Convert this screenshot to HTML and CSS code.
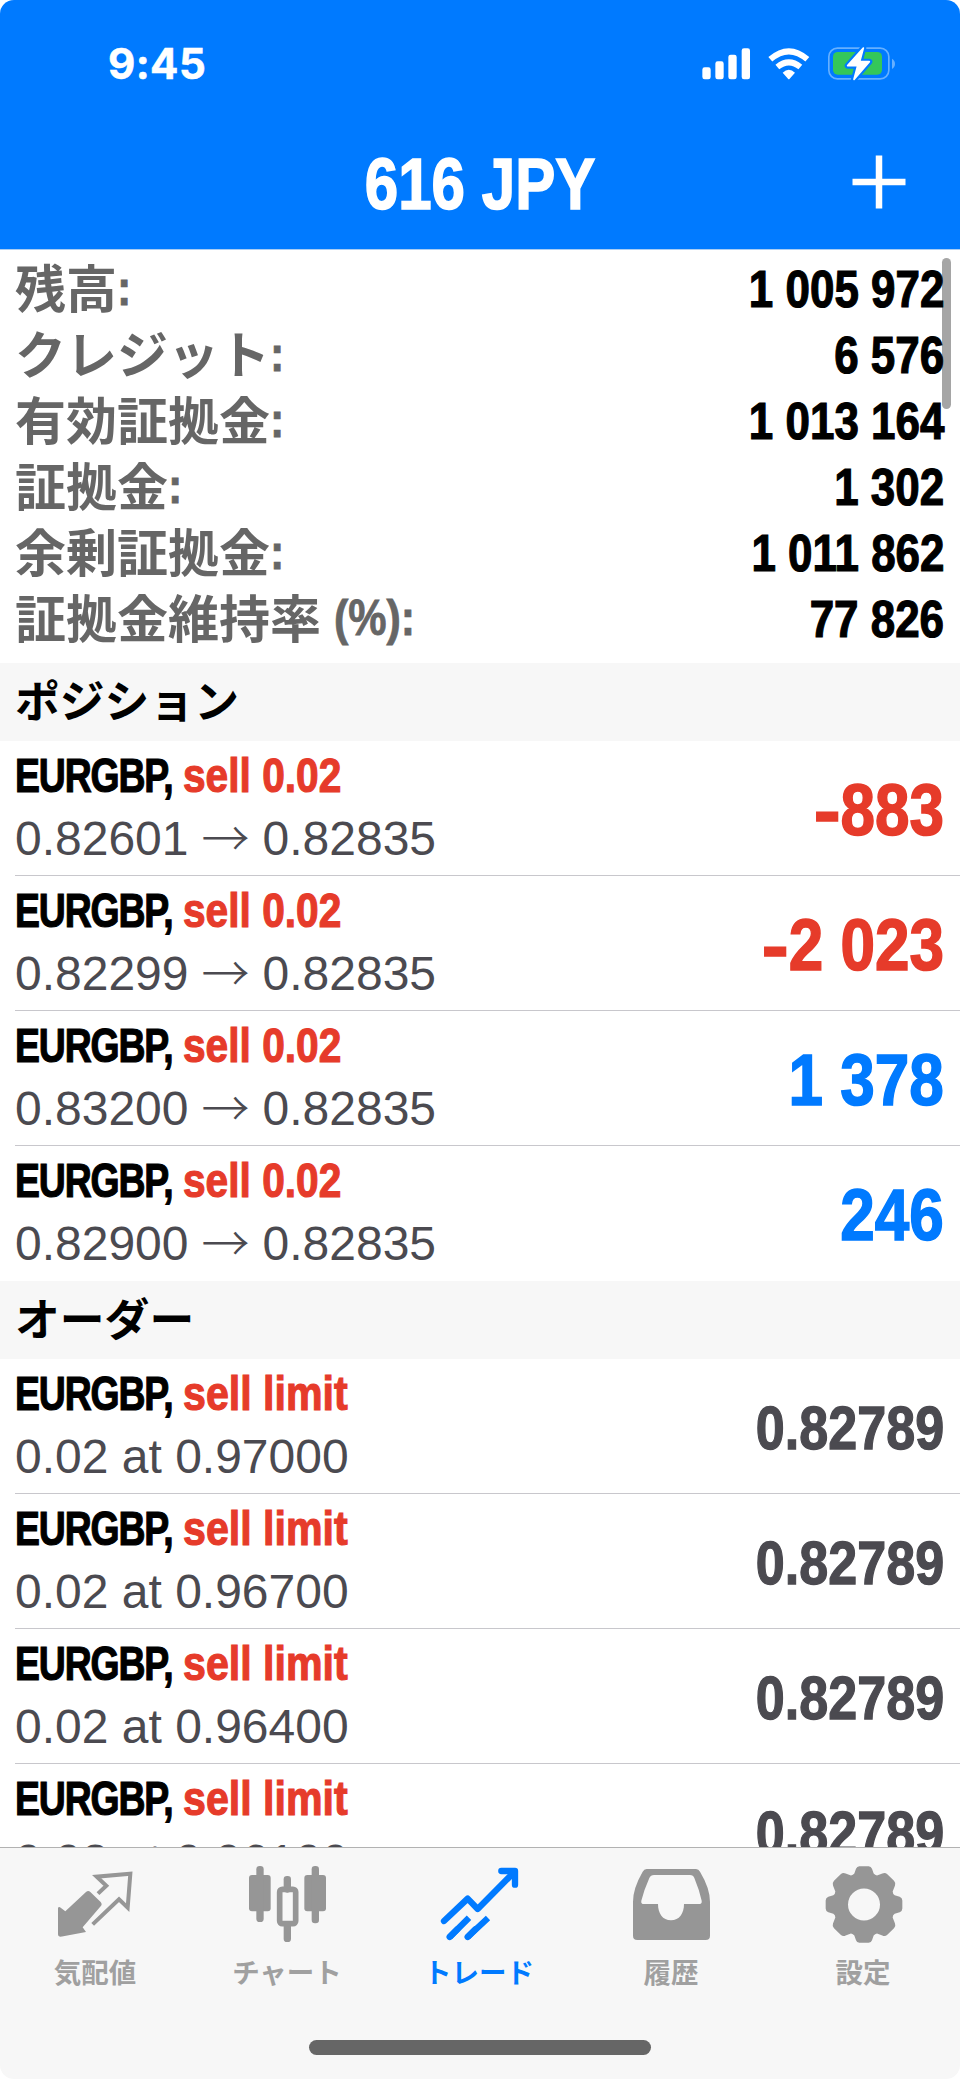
FILE: index.html
```html
<!DOCTYPE html>
<html lang="ja">
<head>
<meta charset="utf-8">
<title>616 JPY</title>
<link rel="stylesheet" href="styles.css">
</head>
<body>
<div class="phone">
  <header class="header">
    <div class="status">
      <span class="time">9:45</span>
      <div class="status-icons">
        <svg class="signal" viewBox="666 143 146 96"><g fill="#fff"><rect x="667" y="201" width="25" height="36" rx="7"/><rect x="706" y="183" width="25" height="54" rx="7"/><rect x="745" y="163" width="25" height="74" rx="7"/><rect x="785" y="144" width="25" height="93" rx="7"/></g></svg>
        <svg class="wifi" viewBox="864 143 126 96"><g fill="none" stroke="#fff" stroke-width="18"><path d="M871 177Q926.500 129 982 177"/><path d="M892 200Q926.500 172 961 200"/></g><path d="M908 217Q926.500 200 945 217L929 235Q926.500 238 924 235Z" fill="#fff"/></svg>
        <svg class="battery" viewBox="1041 138 210 108"><rect x="1046.500" y="144.500" width="180" height="92" rx="26" fill="none" stroke="#66b0ff" stroke-width="5"/><path d="M1236 176Q1245 181 1245 191.500T1236 207Z" fill="#66b0ff"/><rect x="1059" y="156" width="147" height="68" rx="14" fill="#34c759"/><path class="bolt-gap" d="M1150 144L1103 197H1133L1122 238L1168 185H1139Z"/><path class="bolt" d="M1150 144L1103 197H1133L1122 238L1168 185H1139Z"/></svg>
      </div>
    </div>
    <div class="titlebar">
      <h1 class="title">616 JPY</h1>
      <svg class="plus" viewBox="0 0 54 54"><path d="M27 0.500V53.500M0.500 27H53.500" stroke="#fff" stroke-width="6.500"/></svg>
    </div>
  </header>
  <main class="content">
    <i class="scrollbar"></i>
    <dl class="summary">
      <div class="sum-row"><dt>残高<span class="lat">:</span></dt><dd>1 005 972</dd></div>
      <div class="sum-row"><dt>クレジット<span class="lat">:</span></dt><dd>6 576</dd></div>
      <div class="sum-row"><dt>有効証拠金<span class="lat">:</span></dt><dd>1 013 164</dd></div>
      <div class="sum-row"><dt>証拠金<span class="lat">:</span></dt><dd>1 302</dd></div>
      <div class="sum-row"><dt>余剰証拠金<span class="lat">:</span></dt><dd>1 011 862</dd></div>
      <div class="sum-row"><dt>証拠金維持率<span class="lat pct">(%):</span></dt><dd>77 826</dd></div>
    </dl>
    <h2 class="section">ポジション</h2>
    <div class="row"><div class="info"><div class="name"><b class="symbol">EURGBP,</b><b class="action">sell 0.02</b></div><div class="detail">0.82601<span class="arrow">→</span>0.82835</div></div><div class="value loss"><span class="minus">-</span>883</div></div>
    <div class="row"><div class="info"><div class="name"><b class="symbol">EURGBP,</b><b class="action">sell 0.02</b></div><div class="detail">0.82299<span class="arrow">→</span>0.82835</div></div><div class="value loss"><span class="minus">-</span>2 023</div></div>
    <div class="row"><div class="info"><div class="name"><b class="symbol">EURGBP,</b><b class="action">sell 0.02</b></div><div class="detail">0.83200<span class="arrow">→</span>0.82835</div></div><div class="value gain">1 378</div></div>
    <div class="row last"><div class="info"><div class="name"><b class="symbol">EURGBP,</b><b class="action">sell 0.02</b></div><div class="detail">0.82900<span class="arrow">→</span>0.82835</div></div><div class="value gain">246</div></div>
    <h2 class="section">オーダー</h2>
    <div class="row"><div class="info"><div class="name"><b class="symbol">EURGBP,</b><b class="action limit">sell limit</b></div><div class="detail">0.02 at 0.97000</div></div><div class="value price">0.82789</div></div>
    <div class="row"><div class="info"><div class="name"><b class="symbol">EURGBP,</b><b class="action limit">sell limit</b></div><div class="detail">0.02 at 0.96700</div></div><div class="value price">0.82789</div></div>
    <div class="row"><div class="info"><div class="name"><b class="symbol">EURGBP,</b><b class="action limit">sell limit</b></div><div class="detail">0.02 at 0.96400</div></div><div class="value price">0.82789</div></div>
    <div class="row"><div class="info"><div class="name"><b class="symbol">EURGBP,</b><b class="action limit">sell limit</b></div><div class="detail">0.02 at 0.96100</div></div><div class="value price">0.82789</div></div>
  </main>
  <footer class="tabbar">
    <nav class="tabs">
      <a class="tab"><svg viewBox="162 372 252 240"><path d="M180 502L196 514L258 456Q265 450 271 456L302 486Q308 493 302 499L248 562L258 576L182 590Q174 590 174 582V504Q176 499 180 502Z" fill="currentColor"/><path d="M294 461L319 437L290 410L391 401L383 503L357 478L278 553" fill="none" stroke="currentColor" stroke-width="12"/></svg><span>気配値</span></a>
      <a class="tab"><svg viewBox="738 372 252 240"><g fill="currentColor"><rect x="747" y="405" width="65" height="109" rx="9"/><rect x="769" y="378" width="22" height="168" rx="10"/><rect x="913" y="405" width="65" height="109" rx="9"/><rect x="935" y="378" width="22" height="172" rx="10"/><rect x="851" y="408" width="22" height="50" rx="10"/><rect x="851" y="545" width="22" height="61" rx="10"/></g><rect x="839" y="448" width="48" height="103" rx="8" fill="none" stroke="currentColor" stroke-width="17"/></svg><span>チャート</span></a>
      <a class="tab active"><svg viewBox="1314 372 252 240"><g fill="none" stroke="currentColor" stroke-width="19" stroke-linecap="round" stroke-linejoin="round"><path d="M1332 543L1403 476L1433 507L1542 397"/><path d="M1504 393H1545V434"/><path d="M1349 591L1372 568M1403 591L1426 568"/><path stroke-linecap="butt" d="M1349 591L1407 533M1403 591L1464 534"/></g></svg><span>トレード</span></a>
      <a class="tab"><svg viewBox="1890 372 252 240"><path fill="currentColor" fill-rule="evenodd" d="M1940 387H2088Q2096 387 2100 395Q2130 445 2130 485V587Q2130 600 2117 600H1912Q1899 600 1899 587V485Q1899 445 1928 395Q1932 387 1940 387ZM1962 405Q1952 405 1948 414Q1932 450 1924 482Q1922 492 1932 492H1974C1974 520 1988 541 2013 541C2038 541 2052 520 2052 492H2096Q2107 492 2105 482Q2098 450 2083 414Q2080 405 2070 405Z"/></svg><span>履歴</span></a>
      <a class="tab"><svg viewBox="-126 -121.500 252 240"><path fill="currentColor" fill-rule="evenodd" d="M-14 -115H14Q21 -115 24 -107L29 -93Q33 -88 39 -87L55 -93Q63 -97 70 -91L90 -71Q96 -64 93 -57L86 -39Q86 -32 92 -28L107 -23Q115 -20 115 -12V12Q115 20 107 23L92 28Q86 32 86 39L93 57Q96 64 90 71L70 91Q63 97 55 93L39 87Q33 88 29 93L24 107Q21 115 14 115H-14Q-21 115 -24 107L-29 93Q-33 88 -39 87L-55 93Q-63 97 -70 91L-90 71Q-96 64 -93 57L-86 39Q-86 32 -92 28L-107 23Q-115 20 -115 12V-12Q-115 -20 -107 -23L-92 -28Q-86 -32 -86 -39L-93 -57Q-96 -64 -90 -71L-70 -91Q-63 -97 -55 -93L-39 -87Q-33 -88 -29 -93L-24 -107Q-21 -115 -14 -115ZM0 -48A48 48 0 1 0 0 48A48 48 0 1 0 0 -48Z"/></svg><span>設定</span></a>
    </nav>
    <i class="home"></i>
  </footer>
</div>
</body>
</html>
```
FILE: styles.css
```css
* { box-sizing: border-box; margin: 0; padding: 0; }
body { background: #fff; font-family: "Liberation Sans", "Noto Sans CJK JP", sans-serif; color: #000; }
.phone { width: 960px; height: 2079px; display: flex; flex-direction: column; overflow: hidden; border-radius: 14px; }
.header { flex: none; height: 250px; background: #007aff; border-bottom: 1px solid #a9cdf3; display: flex; flex-direction: column; }
.status { height: 128px; display: flex; justify-content: space-between; padding: 0 63px 0 108px; align-items: center; }
.time { font: 700 42px/50px Inter, sans-serif; letter-spacing: .4px; color: #fff; -webkit-text-stroke: .5px; }
.status-icons { display: flex; align-items: center; gap: 17px; }
.signal { width: 48.700px; height: 32px; }
.wifi { width: 42px; height: 32px; }
.battery { width: 70px; height: 36px; }
.bolt-gap { fill: #007aff; stroke: #007aff; stroke-width: 18; stroke-linejoin: round; }
.bolt { fill: #fff; stroke: #fff; stroke-width: 5; stroke-linejoin: round; }
.titlebar { height: 108px; display: grid; grid-template-columns: 1fr auto 1fr; align-items: center; padding: 0 54px; }
.title { grid-column: 2; font-size: 73px; line-height: 84px; padding-top: 3px; color: #fff; white-space: nowrap; transform: scaleX(.823); -webkit-text-stroke: 1.600px; }
.plus { width: 54px; height: 54px; justify-self: end; }
.content { flex: 1; min-height: 0; overflow: hidden; position: relative; }
.scrollbar { position: absolute; right: 9px; top: 8px; width: 9px; height: 151px; border-radius: 5px; background: #a5a5a5; }
.summary { height: 413px; padding: 6px 16px 0 15px; }
.sum-row { height: 66px; display: flex; justify-content: space-between; align-items: center; }
.sum-row dt { display: flex; align-items: center; font: 700 51px/60px "Noto Sans CJK JP", sans-serif; color: #666; white-space: nowrap; padding-bottom: 7px; }
.lat { font: 700 50px/56px "Liberation Sans", sans-serif; padding-top: 4px; transform: scaleX(.86); transform-origin: left; -webkit-text-stroke: .8px; }
.pct { padding-left: 15px; }
.sum-row dd { font-size: 52px; line-height: 66px; font-weight: 700; white-space: nowrap; transform: scaleX(.845); transform-origin: right; -webkit-text-stroke: 1.200px; }
.section { height: 78px; padding-left: 15px; background: #f7f7f7; font: 700 44.800px/72px "Noto Sans CJK JP", sans-serif; }
.row { height: 135px; margin-left: 15px; padding-right: 16px; border-bottom: 1px solid #c8c7cc; display: flex; justify-content: space-between; align-items: center; }
.row.last { border-bottom-color: transparent; }
.info { height: 134px; padding-top: 4px; }
.name { display: flex; font-size: 49px; line-height: 60px; white-space: nowrap; -webkit-text-stroke: 1.200px; }
.symbol { width: 168px; letter-spacing: -1.500px; transform: scaleX(.763); transform-origin: left; }
.action { color: #e63b2a; transform: scaleX(.83); transform-origin: left; }
.action.limit { transform: scaleX(.84); }
.detail { display: flex; font-size: 48px; line-height: 66px; padding-top: 1px; color: #4b4a50; white-space: nowrap; }
.arrow { width: 74px; height: 58px; text-align: center; font: 300 48px/58px "Noto Sans CJK JP", sans-serif; }
.value { font-size: 73px; line-height: 84px; padding-top: 4px; font-weight: 700; white-space: nowrap; transform: scaleX(.85); transform-origin: right; -webkit-text-stroke: 1.600px; }
.minus { display: inline-block; transform: scaleX(1.3); transform-origin: right; }
.loss { color: #e63b2a; }
.gain { color: #007aff; }
.price { font-size: 62px; color: #4b4a50; transform: scaleX(.84); -webkit-text-stroke: 1.300px; }
.tabbar { flex: none; height: 232px; background: #f7f7f7; border-top: 1px solid #b2b2b2; display: flex; flex-direction: column; align-items: center; justify-content: space-between; padding: 16px 0 24px; }
.tabs { width: 960px; display: flex; }
.tab { width: 192px; display: flex; flex-direction: column; align-items: center; color: #969696; }
.tab svg { width: 84px; height: 80px; }
.tab span { font: 700 27.500px/40px "Noto Sans CJK JP", sans-serif; margin: 7px 2px 0 0; color: #a0a0a0; }
.tab.active, .tab.active span { color: #007aff; }
.home { width: 342px; height: 15px; border-radius: 8px; background: #666; }
```
